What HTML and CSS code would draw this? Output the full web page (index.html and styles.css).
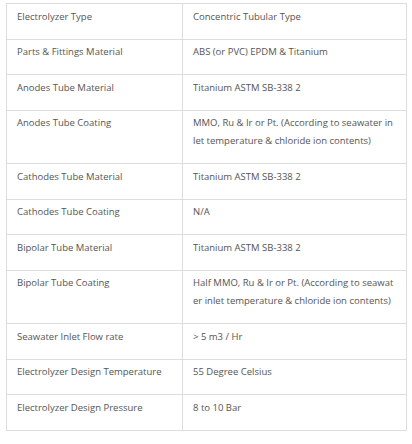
FILE: index.html
```html
<!DOCTYPE html>
<html>
<head>
<meta charset="utf-8">
<link rel="stylesheet" href="styles.css">
</head>
<body>
<table class="spec">
<tbody>
<tr><td class="k">Electrolyzer Type</td><td>Concentric Tubular Type</td></tr>
<tr><td class="k">Parts &amp; Fittings Material</td><td>ABS (or PVC) EPDM &amp; Titanium</td></tr>
<tr><td class="k">Anodes Tube Material</td><td>Titanium ASTM SB-338 2</td></tr>
<tr><td class="k">Anodes Tube Coating</td><td>MMO, Ru &amp; Ir or Pt. (According to seawater in<br>let temperature &amp; chloride ion contents)</td></tr>
<tr><td class="k">Cathodes Tube Material</td><td>Titanium ASTM SB-338 2</td></tr>
<tr><td class="k">Cathodes Tube Coating</td><td>N/A</td></tr>
<tr><td class="k">Bipolar Tube Material</td><td>Titanium ASTM SB-338 2</td></tr>
<tr><td class="k">Bipolar Tube Coating</td><td>Half MMO, Ru &amp; Ir or Pt. (According to seawat<br>er inlet temperature &amp; chloride ion contents)</td></tr>
<tr><td class="k">Seawater Inlet Flow rate</td><td>&gt; 5 m3 / Hr</td></tr>
<tr><td class="k">Electrolyzer Design Temperature</td><td>55 Degree Celsius</td></tr>
<tr><td class="k">Electrolyzer Design Pressure</td><td>8 to 10 Bar</td></tr>
</tbody>
</table>
</body>
</html>
```

FILE: styles.css
```css
html, body {
  margin: 0;
  padding: 0;
  background: #ffffff;
}
body {
  padding: 3px 0 0 6px;
  font-family: "Open Sans", "DejaVu Sans", sans-serif;
  font-size: 9.5px;
  color: #555555;
}
.spec {
  border-collapse: collapse;
  width: 401px;
  table-layout: fixed;
}
.spec td {
  border: 1px solid #dddddd;
  padding: 3.5px 10px 13px 10px;
  line-height: 18px;
  vertical-align: top;
  text-align: left;
}
.spec td.k {
  width: 155px;
}
```
